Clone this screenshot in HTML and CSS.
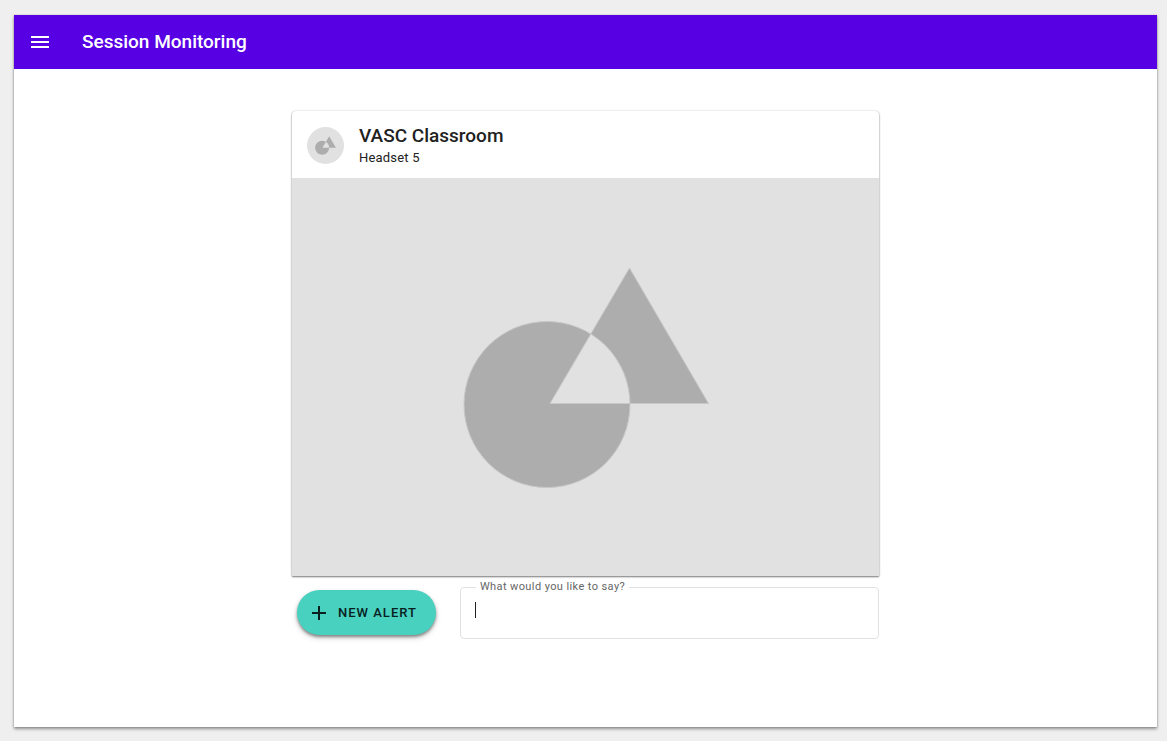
FILE: index.html
```html
<!DOCTYPE html>
<html lang="en">
<head>
  <meta charset="utf-8">
  <meta name="viewport" content="width=device-width, initial-scale=1">
  <title>Session Monitoring</title>
  <link rel="stylesheet" href="styles.css">
</head>
<body class="page">
  <div class="surface">
    <header class="app-bar">
      <button class="menu-button" type="button" aria-label="Menu">
        <svg class="menu-icon" viewBox="0 0 18 12" aria-hidden="true"><path d="M0 0h18v2H0zM0 5h18v2H0zM0 10h18v2H0z"/></svg>
      </button>
      <h1 class="app-title">Session Monitoring</h1>
    </header>
    <main class="content">
      <article class="card">
        <header class="card-header">
          <span class="avatar">
            <svg class="avatar-icon" viewBox="171 88 247 222" aria-hidden="true"><path fill-rule="evenodd" d="M172 226a83 83 0 1 0 166 0a83 83 0 1 0-166 0zM338 89L258 225h159z"/></svg>
          </span>
          <div>
            <h2 class="card-title">VASC Classroom</h2>
            <p class="card-subtitle">Headset 5</p>
          </div>
        </header>
        <svg class="media" viewBox="0 0 587 398" role="img" aria-label="Session view">
          <path class="media-shape" fill-rule="evenodd" d="M172 226.500a83 83 0 1 0 166 0a83 83 0 1 0-166 0zM337.500 90L258 225.500h158.500z"/>
        </svg>
      </article>
      <form class="actions">
        <button class="alert-button" type="button">
          <svg class="plus-icon" viewBox="0 0 14 14" aria-hidden="true"><path d="M6 0h2v6h6v2H8v6H6V8H0V6h6z"/></svg>
          New alert
        </button>
        <fieldset class="field">
          <legend class="field-legend"><label for="message">What would you like to say?</label></legend>
          <textarea class="field-input" id="message" rows="1"></textarea>
        </fieldset>
      </form>
    </main>
  </div>
</body>
</html>
```
FILE: styles.css
```css
* {
  box-sizing: border-box;
}

.page {
  display: flex;
  min-height: 100vh;
  margin: 0;
  padding: 15px 10px 14px 14px;
  background: #efefef;
  color: #212121;
  font-family: Roboto, "Liberation Sans", sans-serif;
}

.surface {
  display: flex;
  flex: 1;
  flex-direction: column;
  background: #fff;
  box-shadow: 0 0 1px rgba(0, 0, 0, 0.3), 0 2px 3px rgba(0, 0, 0, 0.4);
}

.app-bar {
  display: flex;
  align-items: center;
  gap: 24px;
  height: 54px;
  padding: 0 8px;
  background: #5800e4;
  color: #fff;
}

.menu-button {
  display: flex;
  align-items: center;
  justify-content: center;
  width: 36px;
  height: 36px;
  padding: 0;
  border: 0;
  background: none;
  color: inherit;
}

.menu-icon {
  width: 18px;
  height: 12px;
  fill: currentColor;
}

.app-title {
  margin: 0;
  font-size: 19px;
  font-weight: 500;
  line-height: 24px;
}

.content {
  width: 100%;
  max-width: 587px;
  margin: 0 auto;
  padding: 42px 0;
}

.card {
  border-radius: 4px 4px 0 0;
  box-shadow: 0 0 2px rgba(0, 0, 0, 0.16), 0 1px 2px rgba(0, 0, 0, 0.5);
}

.card-header {
  display: flex;
  align-items: center;
  gap: 15px;
  height: 67px;
  padding: 2px 15px 0;
}

.avatar {
  display: flex;
  align-items: center;
  justify-content: center;
  width: 37px;
  height: 37px;
  border-radius: 50%;
  background: #e1e1e1;
}

.avatar-icon {
  width: 21px;
  height: 19px;
  fill: #adadad;
}

.card-title {
  margin: 0;
  font-size: 19px;
  font-weight: 500;
  line-height: 24px;
}

.card-subtitle {
  margin: 0;
  font-size: 13px;
  line-height: 20px;
  letter-spacing: 0.2px;
}

.media {
  display: block;
  width: 100%;
  background: #e1e1e1;
}

.media-shape {
  fill: #adadad;
  stroke: #c8c8c8;
}

.actions {
  display: flex;
  align-items: flex-end;
  gap: 24px;
  padding: 4px 0 0 5px;
}

.alert-button {
  display: flex;
  align-items: center;
  gap: 12px;
  height: 45px;
  margin-bottom: 4px;
  padding: 0 19px 0 15px;
  border: 0;
  border-radius: 23px;
  background: #49d1bf;
  box-shadow: 0 2px 3px rgba(0, 0, 0, 0.4), 0 3px 6px rgba(0, 0, 0, 0.16);
  color: #07201d;
  font: 500 13px/16px Roboto, "Liberation Sans", sans-serif;
  letter-spacing: 1px;
  text-transform: uppercase;
}

.plus-icon {
  width: 14px;
  height: 14px;
  fill: currentColor;
}

.field {
  flex: 1;
  min-width: 0;
  margin: 0;
  padding: 0 14px 12px;
  border: 1px solid #e1e1e1;
  border-radius: 4px;
}

.field-legend {
  padding: 0 4px;
  margin-left: 1px;
  color: #666;
  font-size: 11px;
  line-height: 14px;
  letter-spacing: 0.4px;
}

.field-input {
  display: block;
  width: 100%;
  height: 32px;
  padding: 8px 0 0;
  border: 0;
  outline: 0;
  resize: none;
  overflow: hidden;
  background: linear-gradient(#212121, #212121) 0 8px / 1px 16px no-repeat;
  color: inherit;
  font: 15px/16px Roboto, "Liberation Sans", sans-serif;
}

.field-input:focus {
  background: none;
}
```
